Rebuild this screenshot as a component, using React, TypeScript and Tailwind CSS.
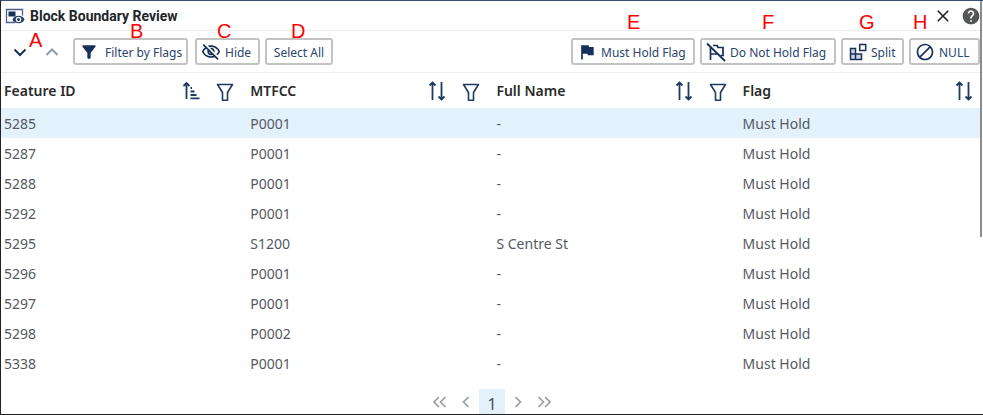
import { ReactNode, useState } from "react";
import { MdBlock, MdFilterAlt, MdFlag, MdHelp, MdOutlineVisibilityOff } from "react-icons/md";

type Row = { id: string; mtfcc: string; name: string; flag: string };

const rows: Row[] = [
  { id: "5285", mtfcc: "P0001", name: "-", flag: "Must Hold" },
  { id: "5287", mtfcc: "P0001", name: "-", flag: "Must Hold" },
  { id: "5288", mtfcc: "P0001", name: "-", flag: "Must Hold" },
  { id: "5292", mtfcc: "P0001", name: "-", flag: "Must Hold" },
  { id: "5295", mtfcc: "S1200", name: "S Centre St", flag: "Must Hold" },
  { id: "5296", mtfcc: "P0001", name: "-", flag: "Must Hold" },
  { id: "5297", mtfcc: "P0001", name: "-", flag: "Must Hold" },
  { id: "5298", mtfcc: "P0002", name: "-", flag: "Must Hold" },
  { id: "5338", mtfcc: "P0001", name: "-", flag: "Must Hold" },
];

const columns = ["Feature ID", "MTFCC", "Full Name", "Flag"];

function ReviewIcon() {
  return (
    <svg viewBox="0 0 20 16" className="h-4 w-5" fill="none">
      <path d="M10 14.500H1.500V1.500h16V7.500" stroke="#4a6288" strokeWidth="1.300" />
      <path d="M3.500 3.500h7v5h-7z" fill="#16305a" />
      <path d="M7.500 11.500c1.200-2.400 3.200-3.700 6-3.700s4.800 1.300 6 3.700c-1.200 2.500-3.200 3.800-6 3.800s-4.800-1.300-6-3.800z" fill="#1d3a63" />
      <circle cx="13.500" cy="11.500" r="2.800" fill="#fff" />
      <circle cx="13.500" cy="11.500" r="1.500" fill="#1d3a63" />
    </svg>
  );
}

function FlagOffIcon() {
  return (
    <svg viewBox="0 0 20 20" className="size-5" fill="none" stroke="#16305a" strokeWidth="1.700">
      <path d="M4.500 5.500V18M7 3.500h4.200l.7 2H17v8h-2.500M4.500 12h6.500" />
      <path d="M1 1.500l18 17.500" strokeWidth="1.800" />
    </svg>
  );
}

function SplitIcon() {
  return (
    <svg viewBox="0 0 18 18" className="size-[18px]" stroke="#16305a" strokeWidth="1.500">
      <path d="M1.500 5.500h5v5.500h-5zM1.500 11h5v5.500h-5zM6.500 11h6v5.500h-6z" fill="#cdd3dc" />
      <path d="M10.700 1.500h6v6h-6z" fill="#fff" />
    </svg>
  );
}

function SortIcon() {
  return (
    <svg viewBox="0 0 18 20" className="h-5 w-[18px]" fill="none" stroke="#1d3a63" strokeWidth="1.800">
      <path d="M4.500 19V1.500M1.500 4.500l3-3 3 3M13.500 1v17.500M10.500 15.500l3 3 3-3" />
    </svg>
  );
}

function SortedIcon() {
  return (
    <svg viewBox="0 0 18 20" className="h-5 w-[18px]" fill="none" stroke="#1d3a63" strokeWidth="1.800">
      <path d="M4.500 18V2M1.500 5L4.500 2l3 3M8.500 7H10M8.500 10.500h4M8.500 14h6M8.500 17.300h9" />
    </svg>
  );
}

function FunnelIcon() {
  return (
    <svg viewBox="0 0 18 20" className="h-5 w-[18px]" fill="none" stroke="#1d3a63" strokeWidth="1.600">
      <path d="M1.500 2.500h15L11.500 10.500v7.800h-5v-7.800z" strokeLinejoin="round" />
    </svg>
  );
}

function Chevrons({ d, label, className }: { d: string; label: string; className: string }) {
  return (
    <button type="button" aria-label={label} className="flex h-6 items-center justify-center">
      <svg viewBox="0 0 14 12" className={className} fill="none" stroke="currentColor">
        <path d={d} />
      </svg>
    </button>
  );
}

function Marker({ children, className }: { children: string; className: string }) {
  return (
    <span className={`pointer-events-none absolute font-['Liberation_Sans',sans-serif] text-xl leading-4 text-[#ff0000] ${className}`}>
      {children}
    </span>
  );
}

function ToolButton({ icon, label, className }: { icon?: ReactNode; label: string; className: string }) {
  return (
    <button
      type="button"
      className={`flex h-[27px] items-center rounded-[3px] border-2 border-[#c2c2c2] bg-white text-xs leading-5 whitespace-nowrap text-[#2b456c] ${className}`}
    >
      {icon}
      <span className="pt-0.5">{label}</span>
    </button>
  );
}

export default function App() {
  const [selected, setSelected] = useState("5285");

  return (
    <div className="relative flex flex-col overflow-hidden border-t border-b border-l border-t-[#3a5078] border-b-[#222] border-l-[#222] bg-white font-['Noto_Sans',sans-serif]">
      <div className="absolute top-0 right-px h-[236px] w-0.5 bg-[#8c8c8c]" />

      <header className="flex h-[30px] items-center border-b border-[#ececec] pr-0.5 pl-1">
        <ReviewIcon />
        <h1 className="ml-1 grow pl-px font-['Roboto',sans-serif] text-sm leading-4 font-bold text-[#212529]">
          Block Boundary Review
        </h1>
        <button type="button" aria-label="Close" className="mr-2.5 p-0.5">
          <svg viewBox="0 0 12 12" className="size-3" stroke="#222" strokeWidth="1.600">
            <path d="M.8.8l10.400 10.400M11.200.8L.8 11.200" />
          </svg>
        </button>
        <button type="button" aria-label="Help">
          <MdHelp className="size-5 text-[#55565a]" />
        </button>
      </header>

      <div className="flex h-[42px] items-center justify-between border-b border-[#ececec] pr-[3px]">
        <div className="flex items-center gap-[7px]">
          <div className="relative mr-[7px] flex gap-[18px] pl-3 text-[#16305a]">
            <Chevrons label="Next" className="w-3.5 stroke-2" d="M1.500 3.500L7 9l5.500-5.500" />
            <span className="flex text-[#8e9bae]">
              <Chevrons label="Previous" className="w-3.5 stroke-2" d="M1.500 9L7 3.500 12.500 9" />
            </span>
            <Marker className="-top-2 left-7">A</Marker>
          </div>
          <div className="relative">
            <ToolButton icon={<MdFilterAlt className="size-5 text-[#16305a]" />} label="Filter by Flags" className="w-[115px] gap-1.5 pl-1" />
            <Marker className="-top-[15px] left-[57px]">B</Marker>
          </div>
          <div className="relative">
            <ToolButton icon={<MdOutlineVisibilityOff className="size-5 text-[#16305a]" />} label="Hide" className="w-[65px] gap-1 pl-1" />
            <Marker className="-top-[15px] left-[22px]">C</Marker>
          </div>
          <div className="relative -ml-0.5">
            <ToolButton label="Select All" className="w-[68px] justify-center" />
            <Marker className="-top-[15px] left-[26px]">D</Marker>
          </div>
        </div>

        <div className="flex items-center gap-[5px]">
          <div className="relative">
            <ToolButton icon={<MdFlag className="size-5 text-[#16305a]" />} label="Must Hold Flag" className="w-[124px] gap-1 pl-1" />
            <Marker className="-top-6 left-[56px]">E</Marker>
          </div>
          <div className="relative">
            <ToolButton icon={<FlagOffIcon />} label="Do Not Hold Flag" className="w-[136px] gap-1 pl-1" />
            <Marker className="-top-6 left-[62px]">F</Marker>
          </div>
          <div className="relative">
            <ToolButton icon={<SplitIcon />} label="Split" className="w-[63px] gap-1 pl-1.5" />
            <Marker className="-top-6 left-[18px]">G</Marker>
          </div>
          <div className="relative">
            <ToolButton icon={<MdBlock className="size-5 text-[#16305a]" />} label="NULL" className="w-[71px] gap-1 pl-1" />
            <Marker className="-top-6 left-1">H</Marker>
          </div>
        </div>
      </div>

      <div className="pr-[3px]">
        <table className="w-full table-fixed border-collapse text-left text-sm leading-5">
          <colgroup>
            <col className="w-[25.150%]" />
            <col className="w-[25.150%]" />
            <col className="w-[25.150%]" />
            <col />
          </colgroup>
          <thead>
            <tr className="h-[35px]">
              {columns.map((column, i) => (
                <th key={column} className={`p-0 pl-[3px] font-semibold text-[#2b2b2b] ${i === 3 ? "pr-[7px]" : "pr-[13px]"}`}>
                  <div className="flex items-center">
                    <span className="grow">{column}</span>
                    <button type="button" aria-label={`Sort by ${column}`}>
                      {i === 0 ? <SortedIcon /> : <SortIcon />}
                    </button>
                    {i < 3 && (
                      <button type="button" aria-label={`Filter ${column}`} className="ml-4 pt-0.5">
                        <FunnelIcon />
                      </button>
                    )}
                  </div>
                </th>
              ))}
            </tr>
          </thead>
          <tbody>
            {rows.map((row) => (
              <tr
                key={row.id}
                onClick={() => setSelected(row.id)}
                className={`h-[30px] text-[#55595f] ${row.id === selected ? "bg-[#e3f1fd]" : ""}`}
              >
                <td className="pt-0.5 pl-[3px]">{row.id}</td>
                <td className="pt-0.5 pl-[3px]">{row.mtfcc}</td>
                <td className="pt-0.5 pl-[3px]">{row.name}</td>
                <td className="pt-0.5 pl-[3px]">{row.flag}</td>
              </tr>
            ))}
          </tbody>
        </table>
      </div>

      <nav aria-label="Pages" className="flex items-end justify-center gap-1.5 pt-[11px] text-[#9a9da2]">
        <div className="flex gap-3">
          <Chevrons label="First page" className="w-3.5 stroke-[1.700]" d="M6 1L1 6l5 5M12.500 1l-5 5 5 5" />
          <Chevrons label="Previous page" className="w-3.5 stroke-[1.700]" d="M9.500 1l-5 5 5 5" />
        </div>
        <button type="button" aria-current="page" className="h-[25px] w-[26px] bg-[#e3f1fd] pt-1 text-base leading-5 text-[#495057]">
          1
        </button>
        <div className="flex gap-3">
          <Chevrons label="Next page" className="w-3.5 stroke-[1.700]" d="M4.500 1l5 5-5 5" />
          <Chevrons label="Last page" className="w-3.5 stroke-[1.700]" d="M1.500 1l5 5-5 5M8 1l5 5-5 5" />
        </div>
      </nav>
    </div>
  );
}
